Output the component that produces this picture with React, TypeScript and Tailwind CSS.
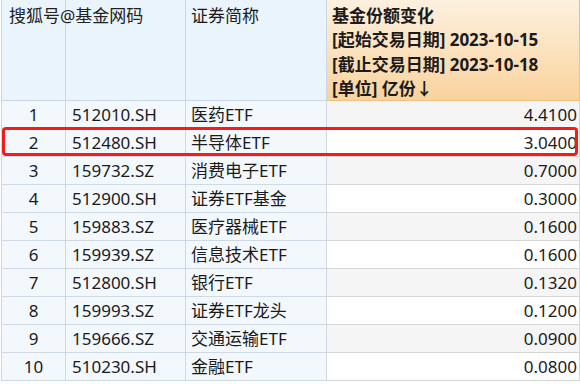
import React from "react";

const rows = [
  ["1", "512010.SH", "医药ETF", "4.4100"],
  ["2", "512480.SH", "半导体ETF", "3.0400"],
  ["3", "159732.SZ", "消费电子ETF", "0.7000"],
  ["4", "512900.SH", "证券ETF基金", "0.3000"],
  ["5", "159883.SZ", "医疗器械ETF", "0.1600"],
  ["6", "159939.SZ", "信息技术ETF", "0.1600"],
  ["7", "512800.SH", "银行ETF", "0.1320"],
  ["8", "159993.SZ", "证券ETF龙头", "0.1200"],
  ["9", "159666.SZ", "交通运输ETF", "0.0900"],
  ["10", "510230.SH", "金融ETF", "0.0800"],
];

export default function App() {
  return (
    <div
      className="relative w-[580px] h-[384px] overflow-hidden bg-white text-[#1b1b1b]"
      style={{ fontFamily: '"Noto Sans", "Noto Sans CJK SC", sans-serif' }}
    >
      <div className="grid grid-cols-[64px_120px_141px_253px] ml-[1px] border-l border-[#c9d7e6] text-[17px]">
        {/* header */}
        <div className="h-[101px] bg-[#eaf4fd] border-r border-b border-[#c9d7e6] relative">
          <span className="absolute left-[7px] top-[4px] whitespace-nowrap leading-[24px] text-[17px] text-[#222] z-10">
            搜狐号@基金网码
          </span>
        </div>
        <div className="h-[101px] bg-[#eaf4fd] border-r border-b border-[#c9d7e6]" />
        <div className="h-[101px] bg-[#eaf4fd] border-r border-b border-[#c9d7e6] pl-[5px] pt-[4px] leading-[24px]">
          证券简称
        </div>
        <div className="h-[101px] bg-gradient-to-b from-[#fdf0df] to-[#fad39d] border-r border-b border-[#f0c080] pl-[5px] pt-[4px] font-bold text-[17px] leading-[24.3px] whitespace-nowrap">
          <div>基金份额变化</div>
          <div>[起始交易日期] 2023-10-15</div>
          <div>[截止交易日期] 2023-10-18</div>
          <div>[单位] 亿份↓</div>
        </div>
        {rows.map((r, i) => (
          <React.Fragment key={i}>
            <div className="h-[28px] bg-[#f3f8fd] border-r border-b border-[#cdd9e5] flex items-center justify-center leading-none">
              {r[0]}
            </div>
            <div className="h-[28px] bg-[#f3f8fd] border-r border-b border-[#cdd9e5] flex items-center pl-[6px] leading-none">
              {r[1]}
            </div>
            <div className="h-[28px] bg-[#f3f8fd] border-r border-b border-[#cdd9e5] flex items-center pl-[5px] leading-none whitespace-nowrap">
              {r[2]}
            </div>
            <div
              className={`h-[28px] border-r border-b border-[#d5d5d5] flex items-center justify-end pr-[2px] leading-none ${
                i % 2 === 0 ? "bg-[#f5f5f5]" : "bg-white"
              }`}
            >
              {r[3]}
            </div>
          </React.Fragment>
        ))}
      </div>
      <div className="absolute left-[2px] top-[127px] w-[576px] h-[29px] border-[3px] border-[#f21c1c] rounded-[4px]" />
    </div>
  );
}
